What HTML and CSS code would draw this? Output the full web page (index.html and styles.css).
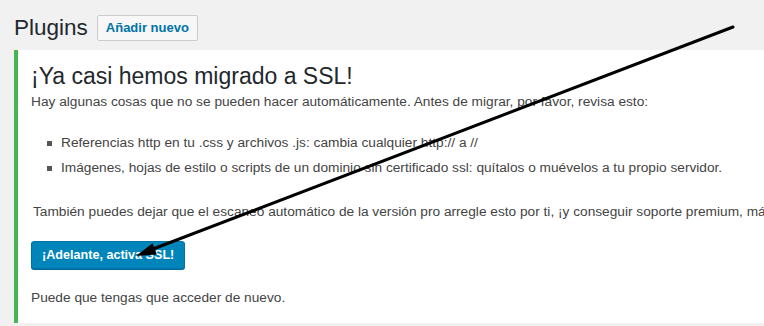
FILE: index.html
```html
<!DOCTYPE html>
<html lang="es">
<head>
  <meta charset="utf-8" />
  <meta name="viewport" content="width=device-width, initial-scale=1" />
  <title>Plugins</title>
  <link rel="stylesheet" href="styles.css">
</head>
<body>
  <div class="wrap">
    <header class="page-head">
      <h1>Plugins</h1>
      <a class="title-action" href="#">Añadir nuevo</a>
    </header>

    <section class="notice">
      <h2>¡Ya casi hemos migrado a SSL!</h2>
      <p class="first">Hay algunas cosas que no se pueden hacer automáticamente. Antes de migrar, por favor, revisa esto:</p>
      <ul class="checks">
        <li>Referencias http en tu .css y archivos .js: cambia cualquier http:// a //</li>
        <li>Imágenes, hojas de estilo o scripts de un dominio sin certificado ssl: quítalos o muévelos a tu propio servidor.</li>
      </ul>
      <p class="pro">También puedes dejar que el escaneo automático de la versión pro arregle esto por ti, ¡y conseguir soporte premium, más funciones y actualizaciones!</p>
      <div class="actions">
        <button class="primary">¡Adelante, activa SSL!</button>
      </div>
      <p class="last">Puede que tengas que acceder de nuevo.</p>
    </section>
  </div>

  <!-- annotation arrow drawn over the screenshot -->
  <svg class="annot" width="764" height="326" viewBox="0 0 764 326">
    <line x1="733" y1="27" x2="153" y2="249" stroke="#000" stroke-width="3" stroke-linecap="round" />
    <polygon points="136,256 152.6,243.2 156.8,254.4" fill="#000" />
  </svg>
</body>
</html>
```

FILE: styles.css
```css
html, body { margin: 0; }
body { background: #f1f1f1; color: #444; font-family: "Liberation Sans", Arial, sans-serif; font-size: 13.7px; overflow: hidden; position: relative; }
.wrap { padding-left: 14px; }

.page-head { display: flex; align-items: center; height: 50px; padding-top: 5px; box-sizing: border-box; }
.page-head h1 { margin: 0; font-size: 22.5px; font-weight: 400; color: #23282d; line-height: 30px; }
.title-action { margin-left: 9px; padding: 0 8px; height: 24px; line-height: 24px; border: 1px solid #ccc; border-radius: 2px; background: #f7f7f7; color: #0073aa; font-size: 13px; font-weight: 600; text-decoration: none; }

.notice { background: #fff; border-left: 4px solid #46b450; box-shadow: 0 1px 1px rgba(0,0,0,.06); padding: 11px 12px 15px 13px; }
.notice h2 { margin: 0; font-size: 23px; font-weight: 400; line-height: 30px; color: #23282d; }
.notice p { margin: 0; line-height: 20px; white-space: nowrap; }
.notice p.first { margin-top: 1px; }

.checks { margin: 21px 0 0; padding-left: 30px; list-style: none; }
.checks li { position: relative; line-height: 20px; margin-bottom: 5px; }
.checks li::before { content: ""; position: absolute; left: -14px; top: 8px; width: 5px; height: 5px; background: #555; }
.checks li:last-child { margin-bottom: 0; }

.notice p.pro { margin-top: 24px; text-indent: 2px; }
.actions { margin-top: 19px; }
.primary { height: 28px; padding: 0 10px; border: 1px solid #0073aa; border-radius: 3px; background: #0085ba; box-shadow: 0 1px 0 #006799; color: #fff; font-family: inherit; font-size: 12.6px; font-weight: 600; cursor: pointer; }
.notice p.last { margin-top: 19px; }

.annot { position: absolute; left: 0; top: 0; pointer-events: none; }
```
